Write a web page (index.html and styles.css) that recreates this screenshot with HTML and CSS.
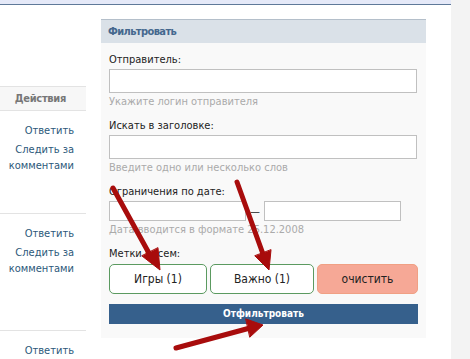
FILE: index.html
```html
<!DOCTYPE html>
<html>
<head>
<meta charset="utf-8">
<link rel="stylesheet" href="styles.css">
</head>
<body>
<div class="page">
  <div class="content">
    <div class="topbar"></div>
    <div class="row">
      <div class="actions">
        <div class="actions-head">Действия</div>
        <div class="action-cell first">
          <a>Ответить</a>
          <a>Следить за<br>комментами</a>
        </div>
        <div class="action-cell second">
          <a>Ответить</a>
          <a>Следить за<br>комментами</a>
        </div>
        <div class="action-cell last">
          <a>Ответить</a>
        </div>
      </div>
      <div class="panel">
        <div class="panel-head">Фильтровать</div>
        <div class="panel-body">
          <div class="label">Отправитель:</div>
          <div class="input"></div>
          <div class="hint">Укажите логин отправителя</div>
          <div class="label">Искать в заголовке:</div>
          <div class="input"></div>
          <div class="hint">Введите одно или несколько слов</div>
          <div class="label">Ограничения по дате:</div>
          <div class="dates">
            <div class="input date"></div>
            <span class="dash">—</span>
            <div class="input date"></div>
          </div>
          <div class="hint">Дата вводится в формате 25.12.2008</div>
          <div class="label">Метки писем:</div>
          <div class="tags">
            <div class="tag">Игры (1)</div>
            <div class="tag">Важно (1)</div>
            <div class="tag clear">очистить</div>
          </div>
          <div class="submit">Отфильтровать</div>
        </div>
      </div>
    </div>
  </div>
  <div class="side"></div>
</div>
<svg class="arrows" width="470" height="359" viewBox="0 0 470 359">
  <g fill="#a80c0c" stroke="#a80c0c" stroke-linecap="round">
    <line x1="113" y1="188" x2="150" y2="255" stroke-width="5"/>
    <polygon points="142,256 160,270 158,248"/>
    <line x1="237" y1="182" x2="263" y2="254" stroke-width="5"/>
    <polygon points="255,256 269,270 271,250"/>
    <line x1="176" y1="348" x2="250" y2="328" stroke-width="5"/>
    <polygon points="246,319 263,325 250,337"/>
  </g>
</svg>
</body>
</html>
```
FILE: styles.css
```css
html, body {
  margin: 0;
  padding: 0;
  background: #fff;
  font-family: "DejaVu Sans Condensed", "DejaVu Sans", Tahoma, sans-serif;
  font-size: 11px;
}
.page {
  display: flex;
  width: 470px;
  height: 359px;
  overflow: hidden;
  position: relative;
}
.content {
  width: 451px;
  flex: none;
}
.side {
  flex: 1;
  background: #f3f3f3;
}
.topbar {
  height: 4px;
  background: #e5e9f8;
  border-bottom: 1px solid #5f7999;
}
.row {
  display: flex;
}
.actions {
  width: 86px;
  flex: none;
  margin-top: 81px;
}
.actions-head {
  height: 23px;
  line-height: 23px;
  border-top: 1px solid #e3e3e3;
  border-bottom: 1px solid #e3e3e3;
  background: #f7f7f7;
  color: #777;
  font-weight: bold;
  text-align: right;
  padding-right: 20px;
  letter-spacing: -0.3px;
}
.action-cell {
  border-bottom: 1px solid #e3e3e3;
  padding: 12px 12px 0 0;
  box-sizing: border-box;
  display: flex;
  flex-direction: column;
  align-items: flex-end;
  gap: 3px;
  text-align: right;
  line-height: 16px;
}
.action-cell.first { height: 103px; }
.action-cell.second { height: 117px; }
.action-cell.last { border-bottom: none; }
.action-cell a {
  color: #2b587a;
}
.panel {
  margin-left: 15px;
  margin-top: 14px;
  width: 325px;
  height: 319px;
  background: #f9f9f9;
  flex: none;
}
.panel-head {
  height: 23px;
  line-height: 24px;
  background: #dae1e8;
  border-top: 1px solid #b4bfca;
  color: #45688e;
  font-weight: bold;
  padding-left: 7px;
  letter-spacing: -0.6px;
}
.panel-body {
  padding: 10px 8px 0 8px;
  display: flex;
  flex-direction: column;
}
.label {
  color: #222;
  line-height: 14px;
  margin-bottom: 2px;
}
.input {
  height: 22px;
  background: #fff;
  border: 1px solid #c0c0c0;
  width: 306px;
}
.hint {
  color: #aaa;
  margin-top: 2px;
  line-height: 14px;
  margin-bottom: 10px;
}
.dates {
  display: flex;
  align-items: center;
}
.input.date {
  width: 135px;
  height: 18px;
}
.dash {
  color: #222;
  width: 18px;
  text-align: center;
}
.tags {
  display: flex;
  gap: 3px;
  margin-top: 1px;
}
.tag {
  height: 28px;
  line-height: 28px;
  width: 96px;
  text-align: center;
  background: #fff;
  border: 1px solid #5b9a60;
  border-radius: 5px;
  color: #222;
  font-size: 12px;
}
.tag:nth-child(2) {
  width: 102px;
}
.tag.clear {
  width: 99px;
  background: #f6a896;
  border-color: #f0a084;
}
.submit {
  margin-top: 10px;
  height: 20px;
  line-height: 20px;
  width: 309px;
  background: #36608c;
  color: #fff;
  text-align: center;
  font-weight: bold;
  font-size: 10px;
}
.arrows {
  position: absolute;
  left: 0;
  top: 0;
  pointer-events: none;
}
```
